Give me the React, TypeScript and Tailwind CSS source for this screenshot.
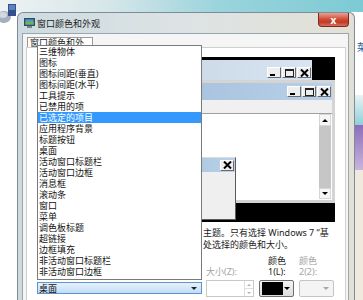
const items = [
  '三维物体',
  '图标',
  '图标间距(垂直)',
  '图标间距(水平)',
  '工具提示',
  '已禁用的项',
  '已选定的项目',
  '应用程序背景',
  '标题按钮',
  '桌面',
  '活动窗口标题栏',
  '活动窗口边框',
  '消息框',
  '滚动条',
  '窗口',
  '菜单',
  '调色板标题',
  '超链接',
  '边框填充',
  '非活动窗口标题栏',
  '非活动窗口边框',
];

function CapButton({ kind }: { kind: 'min' | 'max' | 'close' }) {
  return (
    <div className="flex h-[11px] w-[14px] items-center justify-center border border-t-white border-l-white border-r-[#6b6b6b] border-b-[#6b6b6b] bg-[#eeeeee]">
      {kind === 'min' && <div className="mt-[5px] mr-[3px] h-[2px] w-[5px] bg-black" />}
      {kind === 'max' && <div className="h-[8px] w-[9px] border border-t-2 border-[#222]" />}
      {kind === 'close' && (
        <svg width="9" height="8" viewBox="0 0 9 8">
          <path d="M1 0.5 L8 7.5 M8 0.5 L1 7.5" stroke="#000" strokeWidth="2" />
        </svg>
      )}
    </div>
  );
}

function CapButtons() {
  return (
    <div className="flex gap-px">
      <CapButton kind="min" />
      <CapButton kind="max" />
      <CapButton kind="close" />
    </div>
  );
}

// the left half of the preview sits under the open drop list, so no captions are drawn there
function Preview() {
  return (
    <div className="relative ml-[10px] h-[165px] w-[298px] bg-black pt-[3px]">
      {/* inactive window */}
      <div className="ml-[6px] mr-[23px] flex h-[20px] items-end justify-end bg-[linear-gradient(90deg,#bfcddb,#d7e4f2)] pb-[2px] pr-px">
        <CapButtons />
      </div>
      {/* active window */}
      <div className="ml-[12px] flex h-[123px] flex-col border-[3px] border-[#d4d4d4]">
        <div className="flex h-[17px] items-center justify-end bg-[linear-gradient(90deg,#99b4d1,#b9d1ea)] pr-px">
          <CapButtons />
        </div>
        <div className="h-[14px] border-b border-[#a0a0a0] bg-[#f0f0f0]" />
        <div className="flex flex-1 justify-end bg-white">
          <div className="mb-px mr-px flex w-[12px] flex-col">
            <div className="flex h-[12px] items-center justify-center border border-[#d6d6d6] bg-[#f6f6f6]">
              <div className="h-0 w-0 border-x-[3px] border-b-[3px] border-x-transparent border-b-black" />
            </div>
            <div className="flex-1 bg-[#c6c6c6]" />
            <div className="flex h-[11px] items-center justify-center border border-[#d6d6d6] bg-[#f6f6f6]">
              <div className="h-0 w-0 border-x-[3px] border-t-[3px] border-x-transparent border-t-black" />
            </div>
          </div>
        </div>
      </div>
      {/* message box */}
      <div className="absolute left-[70px] top-[100px] flex h-[63px] w-[129px] flex-col border border-t-[#dcdcdc] border-l-[#dcdcdc] border-r-[#5c5c5c] border-b-[#5c5c5c] bg-[#efefef]">
        <div className="flex h-[14px] items-center justify-end bg-[linear-gradient(90deg,#99b4d1,#b9d1ea)] pr-px">
          <CapButton kind="close" />
        </div>
      </div>
    </div>
  );
}

function DropList() {
  return (
    <div className="absolute bottom-full left-0 z-10 w-full border border-[#7a7a7a] bg-white pb-[2px]">
      {items.map((label) => {
        const selected = label === '已选定的项目';
        return (
          <div
            key={label}
            className={`h-[11px] whitespace-nowrap pl-px text-[9px] leading-[11px] ${
              selected ? 'bg-[#3399ff] text-white' : 'text-[#111]'
            }`}
          >
            {label}
          </div>
        );
      })}
    </div>
  );
}

function Controls() {
  return (
    <div className="ml-[10px] mt-[5px] flex text-[9px] leading-[11px]">
      <div className="flex w-[165px] flex-col">
        <div className="h-[22px]" />
        <div className="relative mt-[3px] h-[17px]">
          <DropList />
          <div className="mt-[2px] flex h-[12px] items-center justify-between border border-[#5e95cf] bg-[linear-gradient(#e6f1fc,#c3dcf7)] pl-px pr-[4px] text-[#111]">
            <span className="leading-none">桌面</span>
            <div className="h-0 w-0 border-x-[3px] border-t-[3px] border-x-transparent border-t-[#222]" />
          </div>
        </div>
      </div>
      <div className="ml-[4px] flex w-[48px] flex-col">
        <div className="flex h-[22px] items-end text-[#a3a3a3]">大小(Z):</div>
        <div className="mt-[3px] flex h-[17px] border border-[#c9c9c9] bg-white">
          <div className="flex-1" />
          <div className="flex w-[9px] flex-col border-l border-[#dedede]">
            <div className="flex flex-1 items-center justify-center border-b border-[#dedede]">
              <div className="h-0 w-0 border-x-[2px] border-b-[2px] border-x-transparent border-b-[#b0b0b0]" />
            </div>
            <div className="flex flex-1 items-center justify-center">
              <div className="h-0 w-0 border-x-[2px] border-t-[2px] border-x-transparent border-t-[#b0b0b0]" />
            </div>
          </div>
        </div>
      </div>
      <div className="ml-[5px] flex w-[35px] flex-col">
        <div className="flex h-[22px] flex-col justify-end pl-[9px] text-[#1a1a1a]">
          <span>颜色</span>
          <span>1(L):</span>
        </div>
        <div className="mt-[3px] flex h-[17px] items-center rounded-[2px] border border-[#707070] bg-[linear-gradient(#f4f4f4,#dcdcdc)] pl-[2px] pr-[3px]">
          <div className="h-[13px] w-[21px] bg-black" />
          <div className="ml-auto h-0 w-0 border-x-[3px] border-t-[3px] border-x-transparent border-t-black" />
        </div>
      </div>
      <div className="ml-[5px] flex w-[35px] flex-col">
        <div className="flex h-[22px] flex-col justify-end text-[#a3a3a3]">
          <span>颜色</span>
          <span>2(2):</span>
        </div>
        <div className="mt-[3px] flex h-[17px] items-center justify-end rounded-[2px] border border-[#c2c5c8] bg-[#f4f4f4] pr-[4px]">
          <div className="h-0 w-0 border-x-[3px] border-t-[3px] border-x-transparent border-t-[#a8a8a8]" />
        </div>
      </div>
    </div>
  );
}

function TabPage() {
  return (
    <div className="-mt-px ml-[3px] flex w-[320px] flex-1 flex-col border border-b-0 border-[#cfcfcf] bg-white pt-[9px]">
      <Preview />
      {/* the start of each line is hidden by the drop list */}
      <div className="ml-[176px] mt-[5px] whitespace-nowrap text-[9px] leading-[11.5px] text-[#1a1a1a]">
        <div>主题。只有选择 Windows 7 “基</div>
        <div>处选择的颜色和大小。</div>
      </div>
      <Controls />
    </div>
  );
}

function TitleIcon() {
  return (
    <svg width="11" height="10" viewBox="0 0 11 10">
      <rect x="0.5" y="0.5" width="10" height="7" fill="#2d5d8e" stroke="#3b4a5a" strokeWidth="1" />
      <rect x="1.5" y="1.5" width="8" height="5" fill="#4fa3b8" />
      <rect x="1.5" y="4" width="8" height="2.5" fill="#6fb25a" />
      <rect x="3" y="8" width="5" height="2" fill="#7a8590" />
    </svg>
  );
}

function DesktopIcon() {
  return (
    <svg className="absolute left-0 top-0" width="20" height="26" viewBox="0 0 20 26">
      <ellipse cx="4" cy="17" rx="7" ry="6" fill="#a5afbd" />
      <ellipse cx="3" cy="15" rx="4" ry="3" fill="#d3d9e1" />
      <rect x="8" y="4" width="8" height="12" fill="#34508f" />
      <rect x="9" y="5" width="6" height="5" fill="#5f7fc0" />
    </svg>
  );
}

export default function App() {
  return (
    <div className="relative flex h-[300px] w-[363px] flex-col overflow-hidden bg-white font-['Noto_Sans','Noto_Sans_CJK_SC',sans-serif] text-black">
      <div className="h-[12px] shrink-0 bg-[linear-gradient(90deg,#eef2f3_0%,#d6e6e9_30%,#9bd4dc_60%,#7ccad4_100%)]" />
      <DesktopIcon />
      <div className="flex min-h-0 flex-1">
        <div className="w-[17px] shrink-0 bg-white" />
        {/* dialog window */}
        <div className="flex w-[338px] shrink-0 flex-col rounded-t-[6px] border border-b-0 border-[#7d8c96] bg-[linear-gradient(90deg,#cddbe0,#dde3e4_50%,#e2e0d6)]">
          <div className="flex h-[20px] items-center pl-[6px]">
            <TitleIcon />
            <span className="ml-[2px] text-[9px] leading-none text-[#1b1b1b]">窗口颜色和外观</span>
            <div className="ml-auto mr-[5px] flex h-[14px] w-[31px] items-center justify-center self-start rounded-b-[4px] border border-t-0 border-[#7a2a20] bg-[linear-gradient(#e9a090,#cf4a35_50%,#c23a26_70%,#d8735e)] text-[10px] font-bold leading-none text-white">
              x
            </div>
          </div>
          <div className="flex min-h-0 flex-1 pl-[4px] pr-[5px]">
            <div className="flex flex-1 flex-col border border-b-0 border-[#9aa5ae] bg-[#f5f5f5]">
              <div className="ml-[4px] mt-[3px] h-[11px] w-[66px] border border-b-0 border-[#9a9a9a] bg-white pl-[2px] text-[9px] leading-[10px] text-[#1a1a1a]">
                窗口颜色和外观
              </div>
              <TabPage />
            </div>
          </div>
        </div>
        {/* desktop on the right */}
        <div className="flex w-[8px] shrink-0 flex-col overflow-hidden">
          <div className="h-[83px] bg-white pl-[2px] pt-[30px] text-[10px] leading-none text-[#2a5b9c]">菜</div>
          <div className="h-[30px] bg-[linear-gradient(#e8f3f4,#8fd0d6)]" />
          <div className="h-[45px] bg-[linear-gradient(#8c6cbc,#c8b6dc)]" />
          <div className="flex-1 bg-[#efe9df]" />
        </div>
      </div>
    </div>
  );
}
